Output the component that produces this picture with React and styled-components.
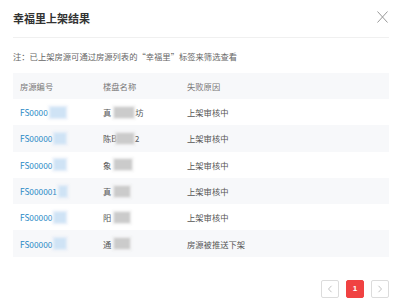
import React from "react";
import styled, { createGlobalStyle } from "styled-components";

const Global = createGlobalStyle`
  html, body { margin: 0; padding: 0; background: #fff; }
  body { font-family: "Noto Sans CJK SC", "Noto Sans", sans-serif; }
`;

const Dialog = styled.div`
  width: 376px;
  padding: 0 11px 0 13px;
  height: 307px;
  box-sizing: content-box;
  display: flex;
  flex-direction: column;
`;

const Header = styled.div`
  height: 37px;
  display: flex;
  align-items: center;
  justify-content: space-between;
  border-bottom: 1px solid #f0f0f0;
`;

const Title = styled.div`
  font-size: 11px;
  font-weight: 700;
  color: #333;
  line-height: 14px;
  margin-top: -1px;
`;

const Close = styled.button`
  border: 0;
  background: none;
  padding: 0;
  margin-right: 1px;
  width: 11px;
  height: 12px;
  display: flex;
  margin-top: -3px;
`;

const Note = styled.div`
  font-size: 8.3px;
  color: #666;
  line-height: 12px;
  margin: 12px 0 11px;
  white-space: nowrap;
`;

const Table = styled.div`
  display: flex;
  flex-direction: column;
`;

const Row = styled.div`
  display: grid;
  grid-template-columns: 83px 84px 1fr;
  height: ${(p) => (p.$head ? "26px" : "26.3px")};
  align-items: center;
  padding-left: 7px;
  background: ${(p) => (p.$shade ? "#f7f8fa" : "#fff")};
  font-size: 8.3px;
  color: ${(p) => (p.$head ? "#777" : "#555")};
  white-space: nowrap;
`;

const Cell = styled.div`
  display: flex;
  align-items: center;
  position: relative;
  color: ${(p) => (p.$link ? "#2b8ac6" : "inherit")};
`;

const Blur = styled.span`
  display: inline-block;
  width: ${(p) => p.$w}px;
  height: 11px;
  background: ${(p) => (p.$blue ? "#cfe3f5" : "#cbcbcb")};
  filter: blur(1px);
  margin-left: ${(p) => p.$ml || 0}px;
  margin-right: 1px;
  box-shadow: 0 0 0 2px ${(p) => (p.$blue ? "rgba(225,236,247,0.5)" : "rgba(232,232,232,0.45)")};
`;

const Pager = styled.div`
  margin-top: 23px;
  display: flex;
  justify-content: flex-end;
  gap: 7px;
`;

const PageBtn = styled.div`
  width: 18px;
  height: 18px;
  box-sizing: border-box;
  border-radius: 2px;
  border: 1px solid ${(p) => (p.$active ? "#f04242" : "#dcdcdc")};
  background: ${(p) => (p.$active ? "#f04242" : "#fff")};
  color: #fff;
  font-size: 8px;
  font-weight: 700;
  display: flex;
  align-items: center;
  justify-content: center;
  font-family: "Liberation Sans", sans-serif;
`;

const Chevron = ({ dir }) => (
  <svg width="6" height="8" viewBox="0 0 6 8">
    <path
      d={dir === "left" ? "M4.5 0.8 L1.5 4 L4.5 7.2" : "M1.5 0.8 L4.5 4 L1.5 7.2"}
      fill="none"
      stroke="#bbb"
      strokeWidth="0.9"
    />
  </svg>
);

const rows = [
  { id: "FS0000", idBlur: 16, pre: "真", tail: "坊", nb: 20 },
  { id: "FS00000", idBlur: 12, pre: "陈B", tail: "2", nb: 18 },
  { id: "FS00000", idBlur: 12, pre: "象", tail: "", nb: 18 },
  { id: "FS000001", idBlur: 8, pre: "真", tail: "", nb: 16 },
  { id: "FS00000", idBlur: 12, pre: "阳", tail: "", nb: 16 },
  { id: "FS00000", idBlur: 12, pre: "通", tail: "", nb: 16, reason: "房源被推送下架" },
];

export default function App() {
  return (
    <>
      <Global />
      <Dialog>
        <Header>
          <Title>幸福里上架结果</Title>
          <Close aria-label="close">
            <svg width="11" height="12" viewBox="0 0 11 12">
              <path d="M0.5 0.5 L10.5 11.5 M10.5 0.5 L0.5 11.5" stroke="#999" strokeWidth="1" fill="none" />
            </svg>
          </Close>
        </Header>
        <Note>注：已上架房源可通过房源列表的“幸福里”标签来筛选查看</Note>
        <Table>
          <Row $head $shade>
            <Cell>房源编号</Cell>
            <Cell>楼盘名称</Cell>
            <Cell>失败原因</Cell>
          </Row>
          {rows.map((r, i) => (
            <Row key={i} $shade={i % 2 === 1}>
              <Cell $link>
                {r.id}
                <Blur $blue $w={r.idBlur} $ml={2} />
              </Cell>
              <Cell>
                {r.pre}
                <Blur $w={r.nb} $ml={r.pre.length > 1 ? -1 : 3} />
                {r.tail}
              </Cell>
              <Cell>{r.reason || "上架审核中"}</Cell>
            </Row>
          ))}
        </Table>
        <Pager>
          <PageBtn><Chevron dir="left" /></PageBtn>
          <PageBtn $active>1</PageBtn>
          <PageBtn><Chevron dir="right" /></PageBtn>
        </Pager>
      </Dialog>
    </>
  );
}
